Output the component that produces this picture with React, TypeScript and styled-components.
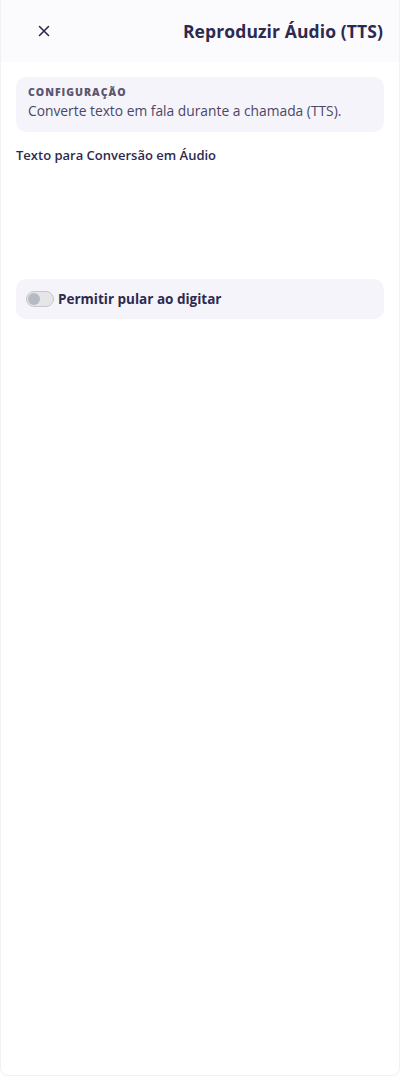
import styled, { createGlobalStyle } from "styled-components"

const GlobalStyle = createGlobalStyle`
  html, body {
    margin: 0;
    padding: 0;
    background: #ffffff;
  }
  body {
    font-family: "Open Sans", "Noto Sans", sans-serif;
    color: #2d2a4f;
  }
`

const Panel = styled.div`
  width: 400px;
  height: 1076px;
  box-sizing: border-box;
  border: 1px solid #f2f2f4;
  border-top: none;
  border-radius: 0 0 8px 8px;
  display: flex;
  flex-direction: column;
  background: #ffffff;
`

const Header = styled.div`
  height: 62px;
  background: #fbfbfd;
  display: flex;
  align-items: center;
  justify-content: space-between;
  padding: 0 16px 0 34px;
  flex-shrink: 0;
`

const CloseButton = styled.button`
  border: none;
  background: transparent;
  padding: 0;
  width: 18px;
  height: 18px;
  display: flex;
  align-items: center;
  justify-content: center;
  cursor: pointer;
  color: #2d2a4f;
`

const Title = styled.h1`
  margin: 0;
  font-size: 17.5px;
  font-weight: 700;
  letter-spacing: 0.1px;
  color: #2d2a4f;
`

const Body = styled.div`
  padding: 15px 15px 0 15px;
  display: flex;
  flex-direction: column;
`

const InfoCard = styled.div`
  background: #f6f4fb;
  border-radius: 10px;
  padding: 8px 12px 10px 12px;
  display: flex;
  flex-direction: column;
  gap: 1px;
`

const Overline = styled.div`
  font-size: 10.5px;
  font-weight: 800;
  letter-spacing: 1px;
  color: #5a5670;
  text-transform: uppercase;
`

const Description = styled.div`
  font-size: 13.8px;
  line-height: 22px;
  color: #4a4765;
`

const FieldLabel = styled.div`
  margin-top: 14px;
  font-size: 13px;
  font-weight: 600;
  color: #2d2a4f;
`

const TextSpace = styled.div`
  height: 115px;
`

const OptionCard = styled.label`
  background: #f6f4fb;
  border-radius: 10px;
  height: 40px;
  padding: 0 10px;
  display: flex;
  align-items: center;
  gap: 4px;
  cursor: pointer;
`

const Track = styled.span<{ $on: boolean }>`
  width: 28px;
  height: 16px;
  box-sizing: border-box;
  border-radius: 8px;
  border: 1px solid #c4c6cc;
  background: ${p => (p.$on ? "#6c5ce7" : "#e6e6e8")};
  display: flex;
  align-items: center;
  padding: 1px;
  justify-content: ${p => (p.$on ? "flex-end" : "flex-start")};
`

const Knob = styled.span`
  width: 12px;
  height: 12px;
  border-radius: 50%;
  background: #b6bbc3;
`

const OptionText = styled.span`
  font-size: 13.5px;
  font-weight: 700;
  color: #2d2a4f;
`

export default function App() {
  return (
    <>
      <GlobalStyle />
      <Panel>
        <Header>
          <CloseButton aria-label="Fechar">
            <svg width="12" height="12" viewBox="0 0 12 12" fill="none">
              <path d="M1.5 1.5L10.5 10.5M10.5 1.5L1.5 10.5" stroke="#2d2a4f" strokeWidth="1.6" strokeLinecap="round" />
            </svg>
          </CloseButton>
          <Title>Reproduzir Áudio (TTS)</Title>
        </Header>
        <Body>
          <InfoCard>
            <Overline>Configuração</Overline>
            <Description>Converte texto em fala durante a chamada (TTS).</Description>
          </InfoCard>
          <FieldLabel>Texto para Conversão em Áudio</FieldLabel>
          <TextSpace />
          <OptionCard>
            <Track $on={false}>
              <Knob />
            </Track>
            <OptionText>Permitir pular ao digitar</OptionText>
          </OptionCard>
        </Body>
      </Panel>
    </>
  )
}
